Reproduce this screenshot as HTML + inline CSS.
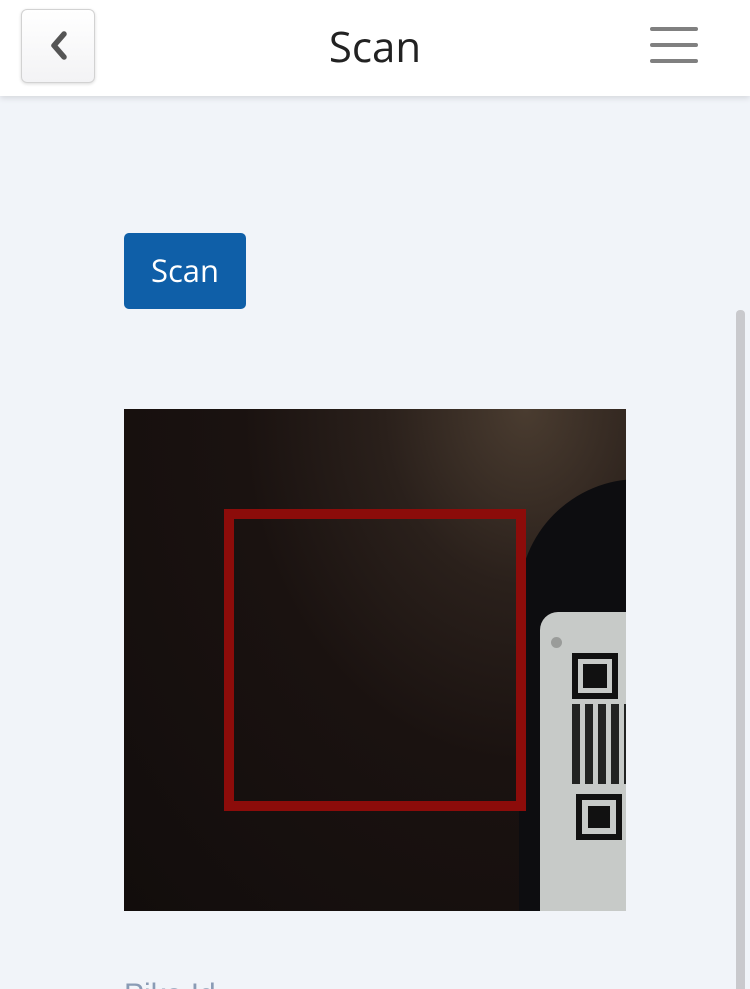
<!DOCTYPE html>
<html><head><style>
html,body{margin:0;width:750px;height:989px;overflow:hidden}
body{background:#f1f4f9;font-family:"Open Sans","Liberation Sans",sans-serif;position:relative}
.hdr{position:absolute;left:0;top:0;width:750px;height:96px;background:#fff;box-shadow:0 2px 6px rgba(0,0,0,.12)}
.back{position:absolute;left:21px;top:9px;width:72px;height:72px;border:1.5px solid #d2d2d2;border-radius:6px;background:linear-gradient(#fff,#f3f3f5);box-shadow:0 1px 3px rgba(0,0,0,.15)}
.title{position:absolute;left:0;width:750px;top:18px;text-align:center;font-size:42px;color:#222}
.bar{position:absolute;left:650px;width:48px;height:4px;background:#808080;border-radius:2px}
.btn{position:absolute;left:124px;top:233px;width:122px;height:76px;background:#0f5fa8;border-radius:5px;color:#fff;font-size:31px;text-align:center;line-height:76px}
.cam{position:absolute;left:124px;top:409px;width:502px;height:502px;overflow:hidden;background:radial-gradient(ellipse at 80% 0%,#4a3c30 0%,#2a201b 25%,#1a1210 50%,#120d0c 100%)}
.sb{position:absolute;left:736px;top:310px;width:9px;height:679px;background:#c9c9cd;border-radius:4px 4px 0 0}
</style></head><body>
<div class="hdr">
<div class="back"><svg width="72" height="72" viewBox="0 0 72 72"><path d="M42 24 L32 35.5 L42 47" fill="none" stroke="#555" stroke-width="5.5" stroke-linecap="round" stroke-linejoin="round"/></svg></div>
<div class="title">Scan</div>
<div class="bar" style="top:27px"></div><div class="bar" style="top:43px"></div><div class="bar" style="top:59px"></div>
</div>
<div class="btn">Scan</div>
<div class="cam">
<div style="position:absolute;left:395px;top:70px;width:250px;height:500px;border-radius:120px 0 0 0;background:#0d0d10"></div>
<div style="position:absolute;left:416px;top:203px;width:100px;height:320px;background:#c7cac8;border-radius:18px 0 0 0"></div>
<div style="position:absolute;left:427px;top:228px;width:11px;height:11px;border-radius:50%;background:#9a9c9a"></div>
<div style="position:absolute;left:448px;top:244px;width:34px;height:34px;border:6px solid #111"></div>
<div style="position:absolute;left:459px;top:255px;width:24px;height:24px;background:#111"></div>
<div style="position:absolute;left:448px;top:295px;width:60px;height:80px;background:repeating-linear-gradient(90deg,#111 0 8px,transparent 8px 13px),repeating-linear-gradient(0deg,#c7cac8 0 5px,transparent 5px 11px);opacity:.9"></div>
<div style="position:absolute;left:452px;top:385px;width:34px;height:34px;border:6px solid #111"></div>
<div style="position:absolute;left:464px;top:397px;width:22px;height:22px;background:#111"></div>
<div style="position:absolute;left:100px;top:100px;width:282px;height:282px;border:10px solid #8c0c0a"></div>
</div>
<div class="sb"></div>
<div style="position:absolute;left:124px;top:978px;font-size:30px;color:#8a9bb5;font-family:'Liberation Sans',sans-serif">Pike Id</div>
</body></html>
